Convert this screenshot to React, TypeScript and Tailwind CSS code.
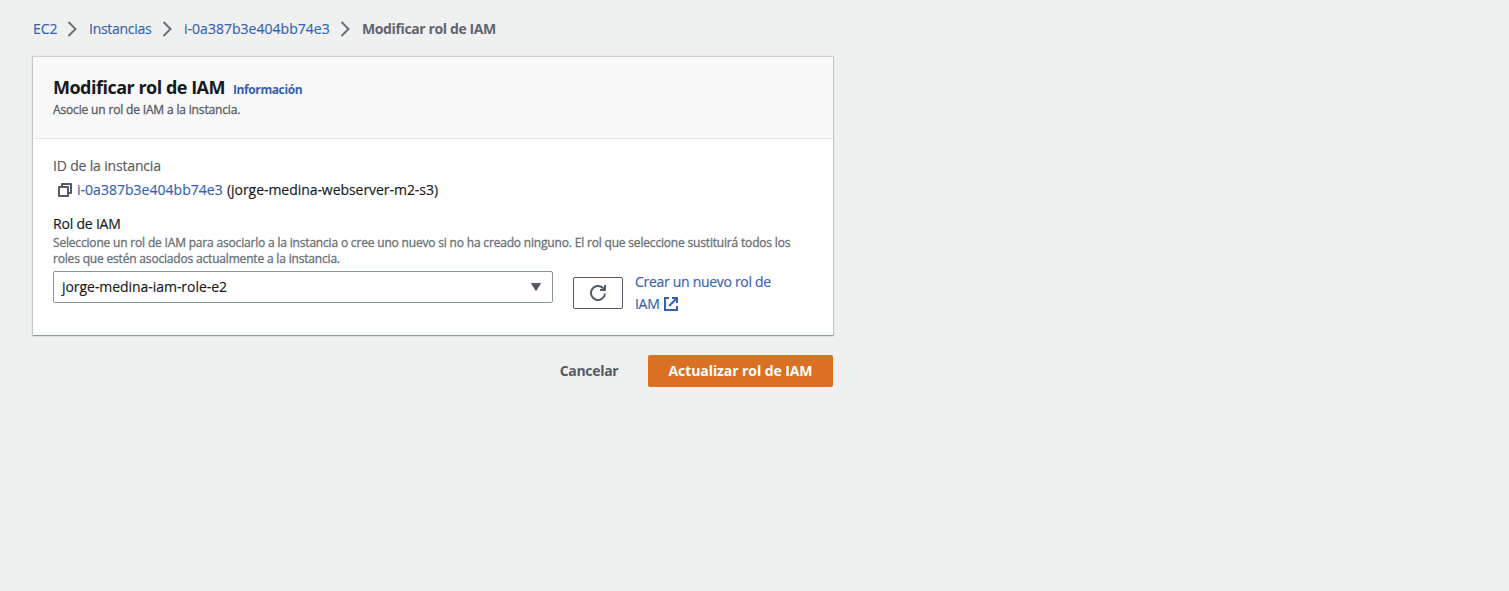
import type { ReactNode } from "react";

function Chevron() {
  return (
    <svg className="block h-4 w-4 shrink-0" viewBox="0 0 16 16" fill="none" stroke="#687078" strokeWidth="2">
      <path d="M4.5 1l7 7-7 7" />
    </svg>
  );
}

function CopyIcon() {
  return (
    <svg className="block h-4 w-4 shrink-0" viewBox="0 0 16 16" fill="none" stroke="#545b64" strokeWidth="2" strokeLinejoin="round">
      <path d="M2 5h9v9H2z" />
      <path d="M5 5V2h9v9h-3" />
    </svg>
  );
}

function RefreshIcon() {
  return (
    <svg className="block h-4 w-4" viewBox="0 0 16 16" fill="none" stroke="#545b64" strokeWidth="2">
      <path d="M15 8.5a7 7 0 1 1-2.3-5.7L15 5" />
      <path d="M15 0v5h-5" />
    </svg>
  );
}

function ExternalIcon() {
  return (
    <svg className="block h-4 w-4 shrink-0" viewBox="0 0 16 16" fill="none" stroke="#355fb3" strokeWidth="2">
      <path d="M6 2H2v12h12v-4" />
      <path d="M9 2h5v5" />
      <path d="M6 10l8-8" />
    </svg>
  );
}

function Link({ className, children }: { className: string; children: ReactNode }) {
  return (
    <a href="#" className={`block shrink-0 whitespace-nowrap text-[#355fb3] ${className}`}>
      {children}
    </a>
  );
}

export default function App() {
  return (
    <div className="min-h-screen bg-[#eff1f0] px-[33px] pt-[18px] font-['Open_Sans',sans-serif] text-[14px] leading-[22px] text-[#16191f] [-webkit-text-stroke:0.15px]">
      <nav className="flex h-[22px] items-center">
        <Link className="w-[31px] tracking-[-0.1px]">EC2</Link>
        <Chevron />
        <Link className="ml-[9px] w-[70px] tracking-[-0.28px]">Instancias</Link>
        <Chevron />
        <Link className="ml-[9px] w-[153px] tracking-[0.02px]">i-0a387b3e404bb74e3</Link>
        <Chevron />
        <span className="ml-[9px] whitespace-nowrap font-bold tracking-[-0.38px] text-[#5f6570] [-webkit-text-stroke:0]">Modificar rol de IAM</span>
      </nav>

      <main className="mt-[17px] w-[800px]">
        <section className="h-[278px] bg-white shadow-[0_1px_1px_0_rgba(0,28,36,0.3),0_0_1px_1px_rgba(0,28,36,0.15)]">
          <header className="h-[82px] border-b border-[#e4e8e8] bg-[#f9f9f9] px-5 pt-[19px]">
            <div className="flex h-[22px] items-baseline">
              <h1 className="w-[180px] whitespace-nowrap text-[18px] font-bold leading-[22px] tracking-[-0.5px] [-webkit-text-stroke:0]">Modificar rol de IAM</h1>
              <Link className="text-[12px] font-bold leading-[16px] tracking-[-0.4px] [-webkit-text-stroke:0]">Información</Link>
            </div>
            <p className="mt-1 whitespace-nowrap text-[12px] font-medium leading-[16px] tracking-[-0.16px] text-[#545b64] [-webkit-text-stroke:0.3px]">Asocie un rol de IAM a la instancia.</p>
          </header>

          <div className="px-5 pt-4">
            <div className="whitespace-nowrap tracking-[-0.17px] text-[#545b64]">ID de la instancia</div>
            <div className="mt-[2px] flex items-center pl-1">
              <CopyIcon />
              <Link className="ml-1 w-[150px] tracking-[0.02px]">i-0a387b3e404bb74e3</Link>
              <span className="whitespace-nowrap tracking-[-0.05px]">(jorge-medina-webserver-m2-s3)</span>
            </div>
            <div className="mt-3 whitespace-nowrap tracking-[-0.2px]">Rol de IAM</div>
            <p className="whitespace-nowrap text-[12px] font-medium leading-[16px] tracking-[-0.18px] text-[#687078] [-webkit-text-stroke:0.3px]">
              Seleccione un rol de IAM para asociarlo a la instancia o cree uno nuevo si no ha creado ninguno. El rol que seleccione sustituirá todos los
              <br />
              roles que estén asociados actualmente a la instancia.
            </p>
            <div className="mt-1 flex">
              <button className="flex h-8 w-[500px] items-center justify-between rounded-[2px] border border-[#879596] bg-white pl-2 pr-[11px]">
                <span className="whitespace-nowrap tracking-[-0.05px]">jorge-medina-iam-role-e2</span>
                <svg className="block h-[10px] w-[10px]" viewBox="0 0 10 10" fill="#545b64" stroke="#545b64" strokeLinejoin="round">
                  <path d="M.5 1.5h9L5 8.5z" />
                </svg>
              </button>
              <button className="ml-5 mt-[6px] flex h-8 w-[50px] items-center justify-center rounded-[2px] border border-[#545b64] bg-white">
                <RefreshIcon />
              </button>
              <div className="ml-3">
                <Link className="tracking-[-0.3px]">Crear un nuevo rol de</Link>
                <div className="flex items-center">
                  <Link className="w-[28px] tracking-[-0.3px]">IAM</Link>
                  <ExternalIcon />
                </div>
              </div>
            </div>
          </div>
        </section>

        <div className="mt-[20px] flex justify-end gap-[9px]">
          <button className="h-8 w-[100px] whitespace-nowrap font-bold tracking-[-0.3px] text-[#545b64] [-webkit-text-stroke:0]">Cancelar</button>
          <button className="h-8 w-[185px] whitespace-nowrap rounded-[2px] bg-[#d97023] font-bold tracking-[-0.08px] text-white [-webkit-text-stroke:0]">Actualizar rol de IAM</button>
        </div>
      </main>
    </div>
  );
}
